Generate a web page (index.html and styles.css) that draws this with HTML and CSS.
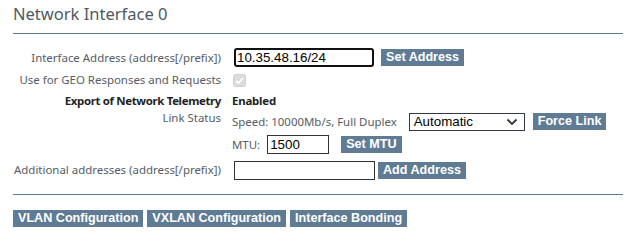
FILE: index.html
```html
<!DOCTYPE html>
<html>
<head>
<meta charset="utf-8">
<link rel="stylesheet" href="styles.css">
</head>
<body>
<div class="page">
  <h2 class="title">Network Interface 0</h2>
  <div class="form">
    <div class="label r1">Interface Address (address[/prefix])</div>
    <div class="value r1">
      <input class="txt focus" type="text" value="10.35.48.16/24">
      <button class="btn">Set Address</button>
    </div>

    <div class="label r2">Use for GEO Responses and Requests</div>
    <div class="value r2">
      <span class="chk"><svg width="13" height="13" viewBox="0 0 13 13"><rect x="0.5" y="0.5" width="12" height="12" rx="2" fill="#dcdcdc" stroke="#d0d0d0"/><path d="M3 6.8 L5.4 9.2 L10 4" fill="none" stroke="#fff" stroke-width="1.8"/></svg></span>
    </div>

    <div class="label bold r3">Export of Network Telemetry</div>
    <div class="value bold r3">Enabled</div>

    <div class="label r4">Link Status</div>
    <div class="value r4 stack">
      <div class="line">
        <span class="speed">Speed: 10000Mb/s, Full Duplex</span>
        <span class="select">Automatic<svg width="12" height="8" viewBox="0 0 12 8"><path d="M1.5 1.5 L6 6 L10.5 1.5" fill="none" stroke="#333" stroke-width="1.8"/></svg></span>
        <button class="btn">Force Link</button>
      </div>
      <div class="line">
        <span class="mtu">MTU:</span>
        <input class="txt mtuin" type="text" value="1500">
        <button class="btn setmtu">Set MTU</button>
      </div>
    </div>

    <div class="label r5">Additional addresses (address[/prefix])</div>
    <div class="value r5">
      <input class="txt add" type="text" value="">
      <button class="btn addbtn">Add Address</button>
    </div>
  </div>
  <div class="actions">
    <button class="btn">VLAN Configuration</button>
    <button class="btn">VXLAN Configuration</button>
    <button class="btn">Interface Bonding</button>
  </div>
</div>
</body>
</html>
```

FILE: styles.css
```css
html, body {
  margin: 0;
  padding: 0;
  background: #fff;
}
.page {
  padding: 0 8px 0 13px;
  font-family: "Noto Sans", "Open Sans", sans-serif;
  color: #555d66;
}
.title {
  margin: 0;
  padding-top: 3px;
  box-sizing: border-box;
  font-size: 16.5px;
  font-weight: normal;
  line-height: 22px;
  color: #4e5966;
  border-bottom: 1px solid #5b7a97;
  height: 34px;
}
.form {
  display: grid;
  grid-template-columns: 208px 1fr;
  column-gap: 11px;
  padding-top: 14px;
  font-size: 11.45px;
  line-height: 14px;
}
.label {
  text-align: right;
  white-space: nowrap;
}
.bold {
  font-weight: bold;
  color: #222;
  letter-spacing: -0.35px;
}
.value.bold { letter-spacing: -0.2px; }
.value {
  display: flex;
  align-items: center;
}
.r1 { height: 19px; display: flex; align-items: center; justify-content: flex-end; }
.value.r1 { justify-content: flex-start; }
.r2 { height: 22px; display: flex; align-items: center; justify-content: flex-end; margin-top: 2px; }
.value.r2 { justify-content: flex-start; }
.r3 { height: 20px; display: flex; align-items: center; justify-content: flex-end; }
.value.r3 { justify-content: flex-start; }
.stack { flex-direction: column; align-items: flex-start; }
.line { display: flex; align-items: center; height: 21px; margin-bottom: 2px; }
.r5 { height: 20px; display: flex; align-items: center; justify-content: flex-end; margin-top: 3px; }
.value.r5 { justify-content: flex-start; }

.txt {
  box-sizing: border-box;
  font-family: "Liberation Sans", Arial, sans-serif;
  font-size: 13.33px;
  color: #000;
  height: 19px;
  border: 1px solid #333;
  padding: 0 2px;
  margin: 0;
  outline: none;
}
.focus {
  width: 140px;
  border: 2px solid #111;
  border-radius: 3px;
  padding: 0 1px;
  height: 19px;
  margin-left: 2px;
}
.btn {
  font-family: "Liberation Sans", Arial, sans-serif;
  font-weight: bold;
  font-size: 12.6px;
  line-height: 15px;
  color: #fff;
  background: #5f7c94;
  border: 0;
  padding: 1px 5px;
  margin: 0;
  height: 17px;
}
.value.r1 .btn { margin-left: 7px; }
.chk { display: inline-flex; margin-left: 1px; }
.speed { color: #555d66; }
.select {
  box-sizing: border-box;
  display: inline-flex;
  align-items: center;
  justify-content: space-between;
  width: 116px;
  height: 18px;
  border: 1px solid #333a44;
  padding: 0 6px 0 4px;
  margin-left: 12px;
  font-family: "Liberation Sans", Arial, sans-serif;
  font-size: 13.33px;
  color: #000;
}
.select + .btn { margin-left: 8px; }
.mtuin { width: 62px; margin-left: 7px; }
.setmtu { margin-left: 12px; }
.add { width: 141px; margin-left: 2px; }
.addbtn { margin-left: 3px; }
.actions {
  border-top: 1px solid #5b7a97;
  margin-top: 14px;
  padding-top: 15px;
  display: flex;
  gap: 4px;
}
```
